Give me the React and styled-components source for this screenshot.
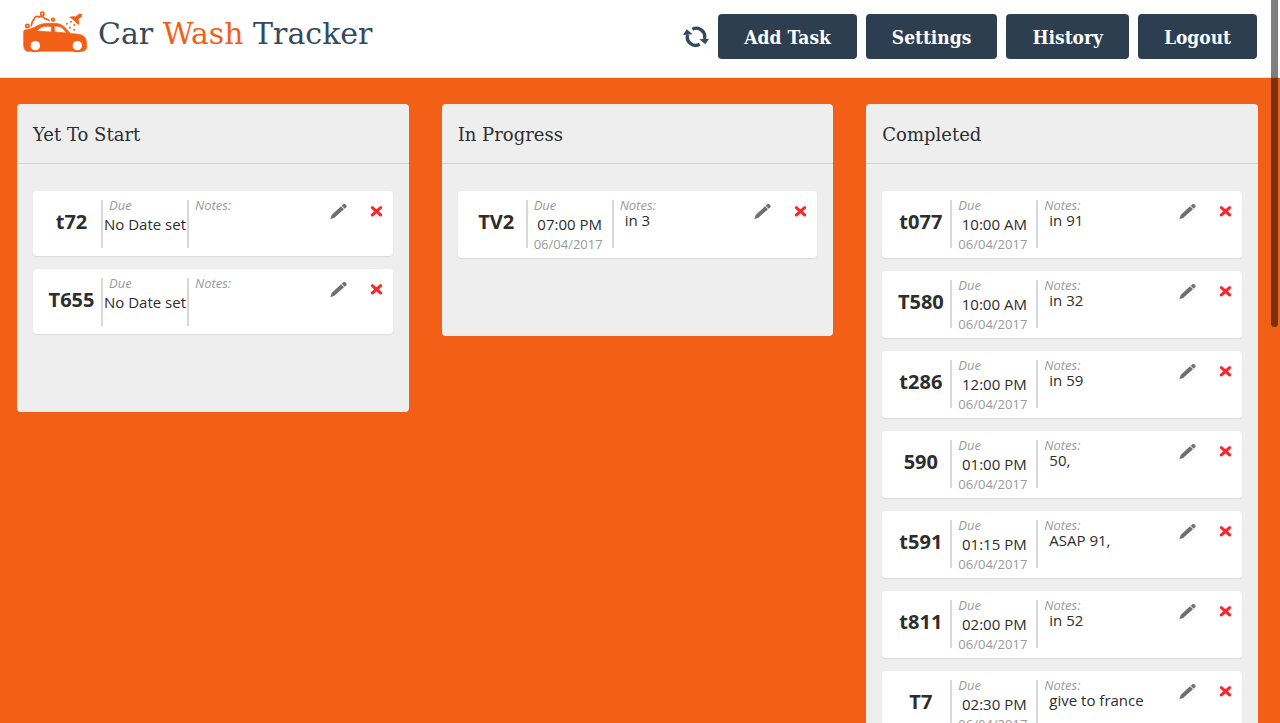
import React from "react";
import styled, { createGlobalStyle } from "styled-components";

const GlobalStyle = createGlobalStyle`
  * {
    box-sizing: border-box;
  }

  html {
    scrollbar-width: none;
  }

  body {
    margin: 0;
    background: #f26018;
    color: #2d2d2d;
    font-family: "Open Sans", "Noto Sans", sans-serif;
  }
`;

const slab = `"DejaVu Serif", serif`;
const slabCondensed = `"DejaVu Serif Condensed", "DejaVu Serif", serif`;

const Page = styled.div`
  height: 100vh;
  overflow-x: hidden;
  overflow-y: auto;
  scrollbar-width: none;
`;

const ScrollThumb = styled.div`
  position: fixed;
  top: 0;
  right: 2px;
  width: 7px;
  height: 327px;
  border-radius: 0 0 4px 4px;
  background: rgba(0, 0, 0, 0.5);
`;

const Header = styled.header`
  display: flex;
  justify-content: space-between;
  align-items: flex-start;
  height: 78px;
  padding: 11px 23px 0;
  background: #fff;
  border-bottom: 1px solid #e7e7e7;
`;

const Brand = styled.a`
  display: flex;
  gap: 10px;
  color: #34495e;
  text-decoration: none;
  font-family: ${slab};
  font-size: 30px;
  line-height: 46px;
  white-space: nowrap;

  svg {
    width: 65px;
    height: 42px;
  }

  span span {
    color: #f26018;
  }
`;

const Nav = styled.nav`
  display: flex;
  align-items: center;
  gap: 9px;
  padding-top: 3px;
`;

const NavButton = styled.button`
  height: 45px;
  padding: 0 26px;
  border: none;
  border-radius: 4px;
  background: #2c3e50;
  color: #fff;
  font-family: ${slabCondensed};
  font-size: 19px;
  font-weight: 700;
  line-height: 24px;
  white-space: nowrap;
  cursor: pointer;
`;

const IconButton = styled.button`
  display: flex;
  padding: 0;
  border: none;
  background: transparent;
  color: ${(props) => props.$color};
  cursor: pointer;
`;

const Board = styled.main`
  display: grid;
  grid-template-columns: repeat(3, 1fr);
  align-items: start;
  gap: 33px;
  padding: 26px 22px 26px 17px;
`;

const Column = styled.section`
  border-radius: 4px;
  background: #eee;
`;

const ColumnTitle = styled.h2`
  margin: 0;
  padding: 17px 16px 15px;
  border-bottom: 1px solid #f1c9b5;
  font-family: ${slab};
  font-size: 18px;
  font-weight: 400;
  line-height: 27px;
`;

const TaskList = styled.ul`
  display: flex;
  flex-direction: column;
  gap: 13px;
  margin: 0;
  padding: 27px 16px 78px;
  list-style: none;
`;

const Card = styled.li`
  display: flex;
  align-items: flex-start;
  min-height: 65px;
  border-radius: 4px;
  background: #fff;
  box-shadow: 0 1px 1px rgba(0, 0, 0, 0.08);
`;

const TaskId = styled.h3`
  width: 68px;
  margin: 0;
  padding: 17px 0 0 9px;
  font-size: 20px;
  font-weight: 700;
  line-height: 28px;
  text-align: center;
`;

const Divider = styled.span`
  width: 2px;
  height: 48px;
  margin-top: 9px;
  background: #d8d8d8;
`;

const Due = styled.div`
  width: 84px;
  padding: 6px 0 5px;
  text-align: center;
  white-space: nowrap;
`;

const Label = styled.div`
  padding-left: 6px;
  color: #999;
  font-size: 13px;
  font-style: italic;
  line-height: 16px;
  text-align: left;
`;

const Time = styled.div`
  font-size: 15px;
  line-height: 22px;
`;

const DueDate = styled.div`
  padding-right: 3px;
  color: #999;
  font-size: 13px;
  line-height: 18px;
`;

const Notes = styled.div`
  flex: 1;
  min-width: 0;
  padding-top: 6px;
`;

const NoteText = styled.div`
  padding-left: 11px;
  font-size: 15px;
  line-height: 14px;
`;

const Actions = styled.div`
  display: flex;
  align-items: center;
  gap: 23px;
  padding: 12px 10px 0 0;
`;

const Logo = () => (
  <svg viewBox="40 34 195 126" aria-hidden="true">
    <g fill="none" stroke="#f26018" strokeWidth="5" strokeLinecap="round">
      <circle cx="53" cy="79" r="5" />
      <circle cx="98" cy="42" r="5" />
      <circle cx="130" cy="60" r="4" />
      <path d="M65 78c2-12 5-17 9-20 0-8 9-10 14-6 8-4 14-1 17 5 6 0 8 3 13 5" />
    </g>
    <path
      fill="#f26018"
      stroke="#f26018"
      strokeWidth="2"
      fillRule="evenodd"
      d="M44 91c14-1 26-5 36-11 12-7 21-9 36-9h18c18 0 29 7 45 27l5 4c21 0 34 3 40 9 5 5 7 14 7 24v9c-1 6-5 9-12 11H52c-6-1-8-7-10-15V113c0-10-1-18 2-22zM82 94l43 3V80h-12c-14 0-22 4-31 14zM133 80l3 17 35 3c-10-14-18-20-31-20z"
    />
    <circle cx="77" cy="138" r="20" fill="#f26018" />
    <circle cx="203" cy="138" r="20" fill="#f26018" />
    <circle cx="77" cy="138" r="14" fill="#fff" />
    <circle cx="203" cy="138" r="14" fill="#fff" />
    <g fill="#f26018">
      <path d="M178 52c7-2 13-3 19-1l11-9 9 1-1 9-10 7c3 6 2 12 1 18-10-11-18-19-29-25z" />
      <circle cx="184" cy="66" r="3" />
      <circle cx="172" cy="72" r="3" />
      <circle cx="194" cy="76" r="3" />
      <circle cx="181" cy="84" r="3" />
      <circle cx="194" cy="90" r="3" />
    </g>
  </svg>
);

const RefreshIcon = () => (
  <svg width="26" height="22" viewBox="9 14 78 66" aria-hidden="true">
    <g fill="none" stroke="currentColor" strokeWidth="10">
      <path d="M23 40a25 25 0 0 0 36 29" />
      <path d="M37 24a25 25 0 0 1 36 29" />
    </g>
    <path fill="currentColor" d="M9 41l11-17 18 15zM87 52L76 69 58 54z" />
  </svg>
);

const PencilIcon = () => (
  <svg width="17" height="17" viewBox="0 0 51 51" aria-hidden="true">
    <path
      fill="currentColor"
      d="M1 49l4-13 28-26 9 9-29 25zM35 8l5-4c6-3 12 3 9 9l-5 4z"
    />
  </svg>
);

const RemoveIcon = () => (
  <svg width="13" height="11" viewBox="0 0 39 33" aria-hidden="true">
    <path
      stroke="currentColor"
      strokeWidth="9"
      strokeLinecap="round"
      d="M7 5l25 22M32 5L7 27"
    />
  </svg>
);

const columns = [
  {
    title: "Yet To Start",
    tasks: [{ id: "t72" }, { id: "T655" }],
  },
  {
    title: "In Progress",
    tasks: [{ id: "TV2", time: "07:00 PM", date: "06/04/2017", notes: "in 3" }],
  },
  {
    title: "Completed",
    tasks: [
      { id: "t077", time: "10:00 AM", date: "06/04/2017", notes: "in 91" },
      { id: "T580", time: "10:00 AM", date: "06/04/2017", notes: "in 32" },
      { id: "t286", time: "12:00 PM", date: "06/04/2017", notes: "in 59" },
      { id: "590", time: "01:00 PM", date: "06/04/2017", notes: "50," },
      { id: "t591", time: "01:15 PM", date: "06/04/2017", notes: "ASAP 91," },
      { id: "t811", time: "02:00 PM", date: "06/04/2017", notes: "in 52" },
      { id: "T7", time: "02:30 PM", date: "06/04/2017", notes: "give to france" },
    ],
  },
];

const Task = ({ task }) => (
  <Card>
    <TaskId>{task.id}</TaskId>
    <Divider />
    <Due>
      <Label>Due</Label>
      <Time>{task.time || "No Date set"}</Time>
      {task.date && <DueDate>{task.date}</DueDate>}
    </Due>
    <Divider />
    <Notes>
      <Label>Notes:</Label>
      {task.notes && <NoteText>{task.notes}</NoteText>}
    </Notes>
    <Actions>
      <IconButton $color="#6f6f6f" aria-label={`Edit ${task.id}`}>
        <PencilIcon />
      </IconButton>
      <IconButton $color="#f9292b" aria-label={`Delete ${task.id}`}>
        <RemoveIcon />
      </IconButton>
    </Actions>
  </Card>
);

const App = () => {
  return (
    <Page>
      <GlobalStyle />
      <Header>
        <Brand href="#">
          <Logo />
          <span>
            Car <span>Wash</span> Tracker
          </span>
        </Brand>
        <Nav>
          <IconButton $color="#34495e" aria-label="Refresh">
            <RefreshIcon />
          </IconButton>
          <NavButton>Add Task</NavButton>
          <NavButton>Settings</NavButton>
          <NavButton>History</NavButton>
          <NavButton>Logout</NavButton>
        </Nav>
      </Header>
      <Board>
        {columns.map((column) => (
          <Column key={column.title}>
            <ColumnTitle>{column.title}</ColumnTitle>
            <TaskList>
              {column.tasks.map((task) => (
                <Task key={task.id} task={task} />
              ))}
            </TaskList>
          </Column>
        ))}
      </Board>
      <ScrollThumb />
    </Page>
  );
};

export default App;
